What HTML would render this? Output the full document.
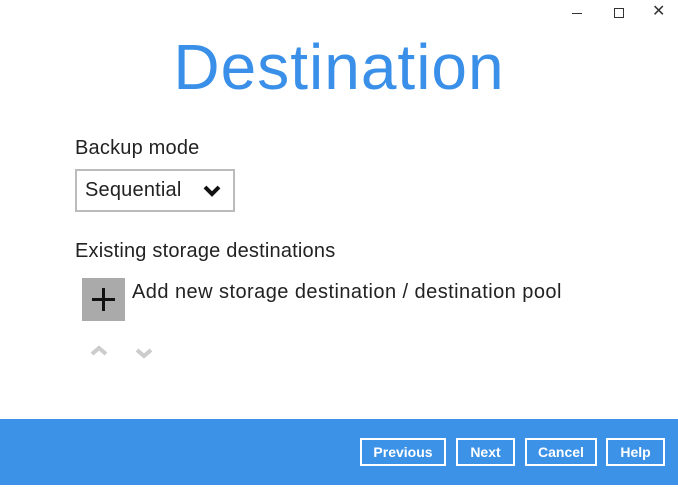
<!DOCTYPE html>
<html><head><style>
body{margin:0;width:678px;height:487px;background:#fff;position:relative;overflow:hidden;font-family:"Liberation Sans",sans-serif;color:#222}
.a{position:absolute}
.t{font-size:20px;letter-spacing:0.2px}
.btn{position:absolute;top:438px;height:24px;border:2px solid #fff;color:#fff;font-weight:bold;font-size:14px;text-align:center;line-height:24px;box-sizing:content-box}
</style></head><body>
<div class="a" style="left:572px;top:13px;width:10px;height:1px;background:#333"></div>
<div class="a" style="left:614px;top:8px;width:8px;height:8px;border:1px solid #333"></div>
<div class="a" style="left:652px;top:1px;font-size:16px;color:#333">✕</div>
<div class="a" style="left:0;top:30px;width:678px;text-align:center;font-size:64px;color:#3a90e8;letter-spacing:1px">Destination</div>
<div class="a t" style="left:75px;top:137px">Backup mode</div>
<div class="a" style="left:75px;top:169px;width:160px;height:43px;border:2px solid #bbb;box-sizing:border-box"></div>
<div class="a t" style="left:85px;top:179px">Sequential</div>
<svg class="a" style="left:203px;top:184px" width="18" height="14"><path d="M2 3l7 7 7-7" stroke="#111" stroke-width="4" fill="none"/></svg>
<div class="a t" style="left:75px;top:240px">Existing storage destinations</div>
<div class="a" style="left:82px;top:278px;width:43px;height:43px;background:#aaa"></div>
<div class="a" style="left:92px;top:298px;width:23px;height:3px;background:#111"></div>
<div class="a" style="left:102px;top:288px;width:3px;height:23px;background:#111"></div>
<div class="a t" style="left:132px;top:281px;letter-spacing:0.45px">Add new storage destination / destination pool</div>
<svg class="a" style="left:90px;top:345px" width="18" height="12"><path d="M2 9l7-6 7 6" stroke="#ccc" stroke-width="4" fill="none"/></svg>
<svg class="a" style="left:135px;top:347px" width="18" height="12"><path d="M2 3l7 6 7-6" stroke="#ccc" stroke-width="4" fill="none"/></svg>
<div class="a" style="left:0;top:419px;width:678px;height:66px;background:#3b92e6"></div>
<div class="btn" style="left:360px;width:82px">Previous</div>
<div class="btn" style="left:456px;width:55px">Next</div>
<div class="btn" style="left:525px;width:68px">Cancel</div>
<div class="btn" style="left:606px;width:55px">Help</div>
</body></html>
